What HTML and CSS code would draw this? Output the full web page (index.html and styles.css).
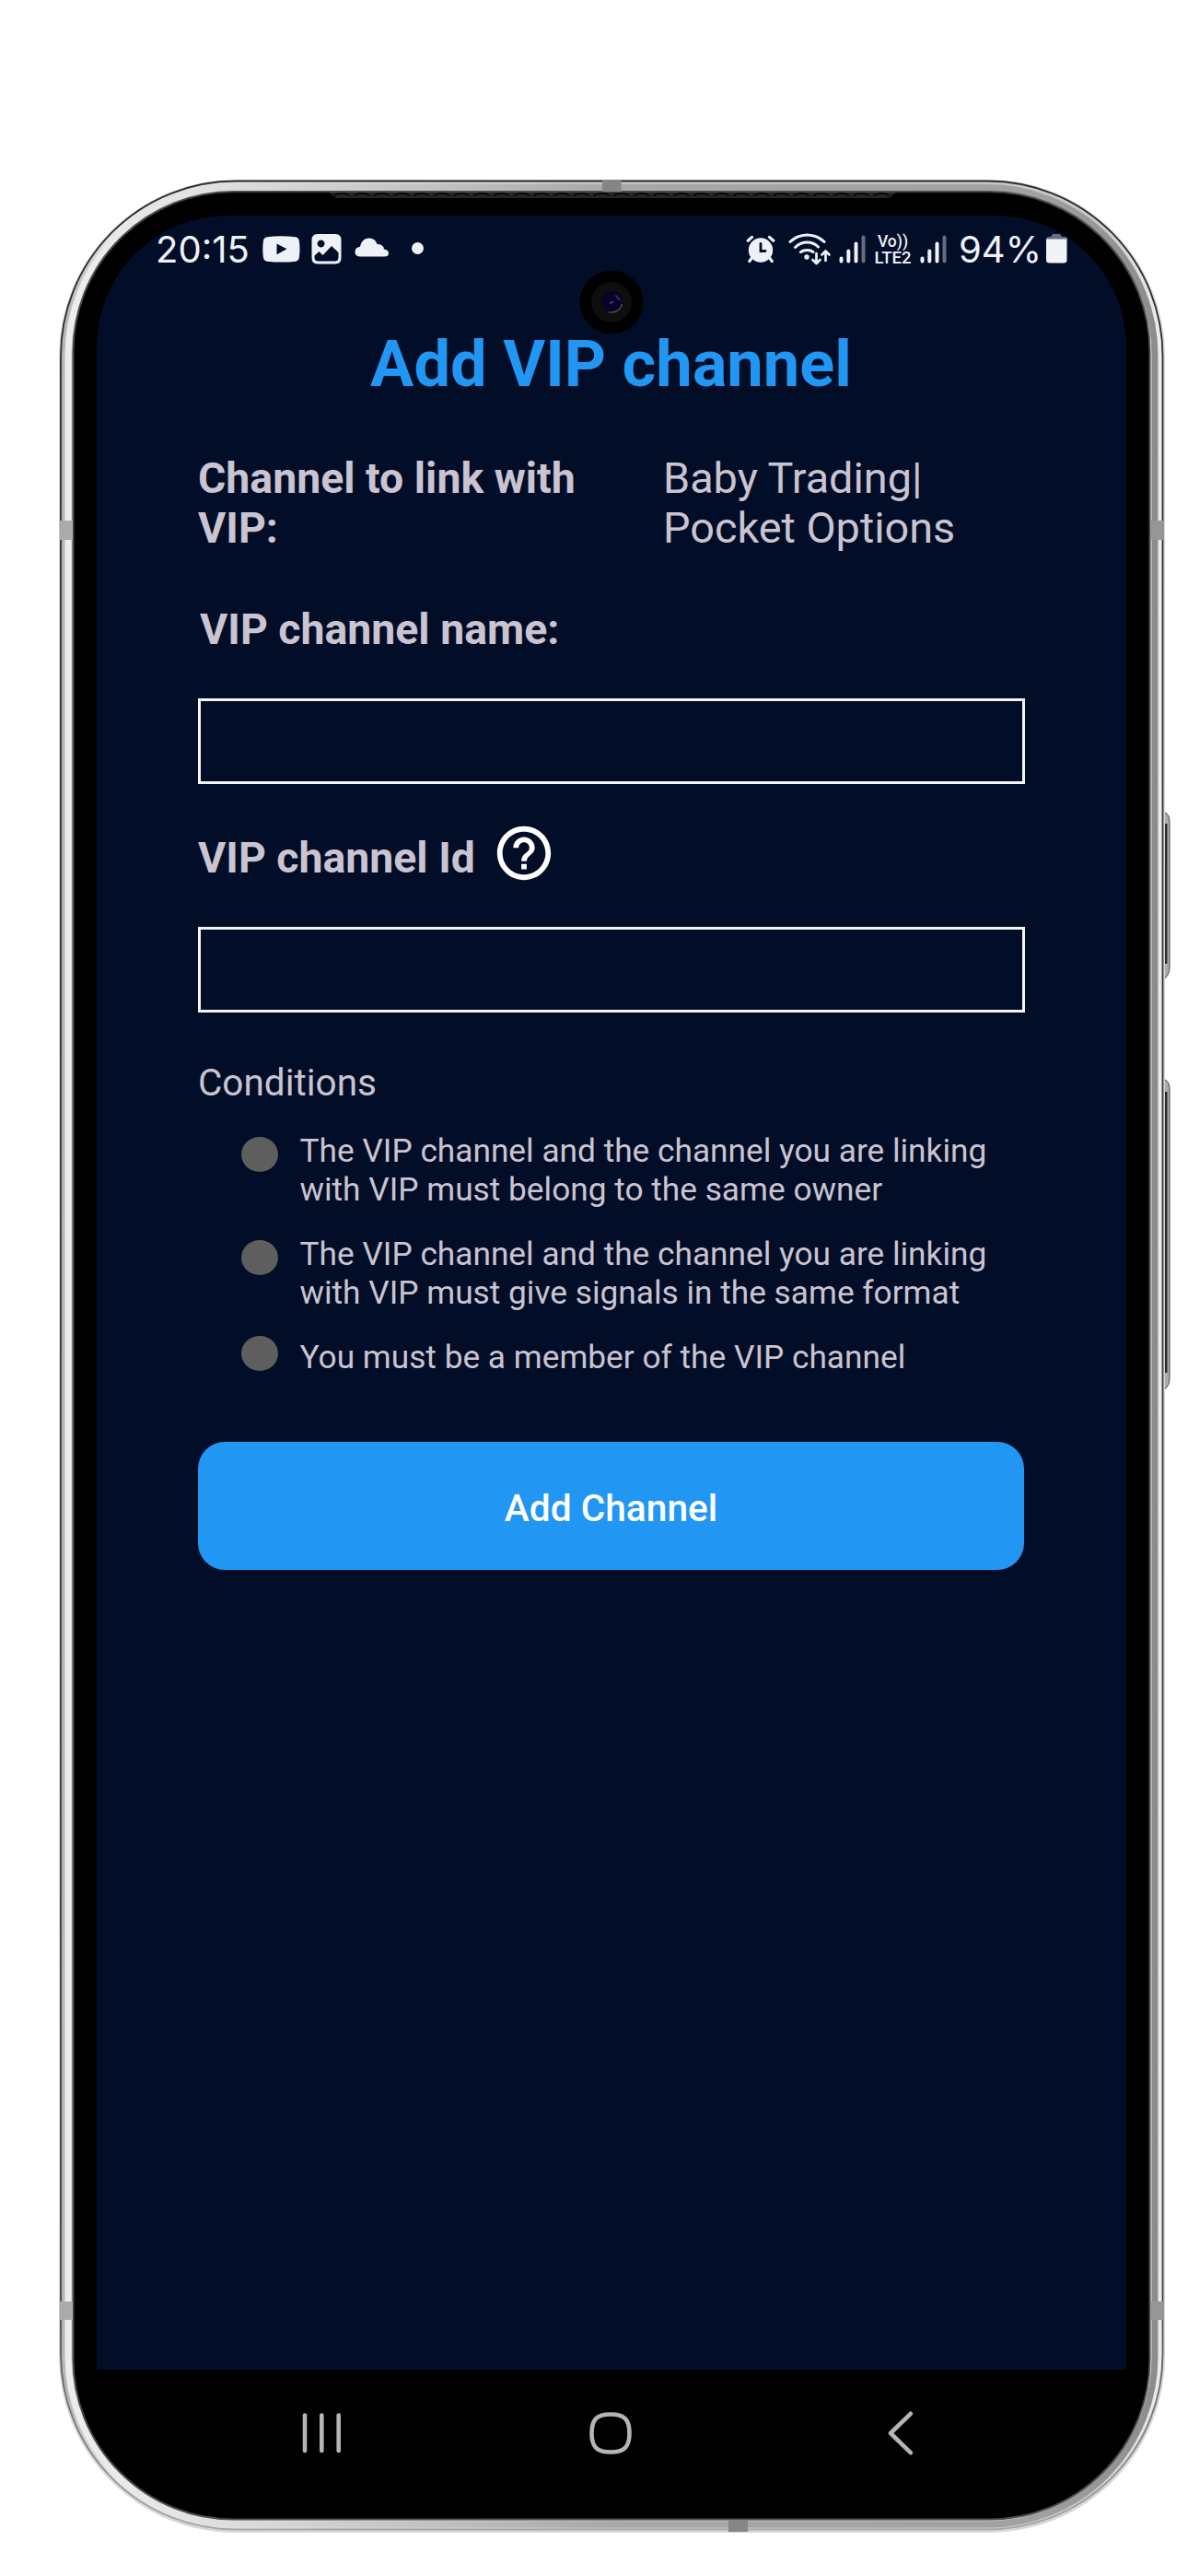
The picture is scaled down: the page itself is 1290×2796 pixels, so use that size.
FILE: index.html
```html
<!DOCTYPE html>
<html lang="en">
<head>
<meta charset="utf-8">
<title>Add VIP channel</title>
<link rel="stylesheet" href="styles.css">
</head>
<body>
<div class="phone">
  <svg class="frame" width="1220" height="2560" viewBox="60 192 1220 2560" fill="none" aria-hidden="true">
    <defs>
      <linearGradient id="metal" x1="0" y1="0" x2="1" y2="0">
        <stop offset="0" stop-color="#b4b4b4"/><stop offset=".05" stop-color="#e8e8e8"/><stop offset=".5" stop-color="#c4c4c4"/><stop offset=".94" stop-color="#c8c8c8"/><stop offset="1" stop-color="#eee"/>
      </linearGradient>
      <linearGradient id="inner" x1="0" y1="0" x2="1" y2="0">
        <stop offset="0" stop-color="#ededed"/><stop offset=".1" stop-color="#e4e4e4"/><stop offset=".5" stop-color="#a8a8a8"/><stop offset=".9" stop-color="#a0a0a0"/><stop offset="1" stop-color="#8c8c8c"/>
      </linearGradient>
      <linearGradient id="rim" x1="0" y1="0" x2="0" y2="1">
        <stop offset="0" stop-color="#2c2c2c"/><stop offset=".9" stop-color="#444"/><stop offset="1" stop-color="#a8a8a8"/>
      </linearGradient>
      <pattern id="mesh" width="21.7" height="7" patternUnits="userSpaceOnUse" x="361" y="208">
        <path d="M2 5q1-3 8-3t8 3" stroke="#080808" stroke-width="2"/>
      </pattern>
    </defs>
    <path d="M1263 882h2q5 2 5 10v158q0 9-7 13z" fill="#a9adab" stroke="#454848"/>
    <path d="M1266 894v152" stroke="#272d2d" stroke-width="3"/>
    <path d="M1263 1172h2q5 2 5 10v314q0 9-7 13z" fill="#a9adab" stroke="#454848"/>
    <path d="M1266 1185v305" stroke="#272d2d" stroke-width="3"/>
    <rect x="64" y="195" width="1201" height="2554" rx="192" fill="#d8d8d8"/>
    <rect x="66" y="196.500" width="1196.500" height="2549" rx="190" fill="url(#metal)" stroke="url(#rim)" stroke-width="1.800"/>
    <rect x="74" y="203.500" width="1180" height="2536.500" rx="182" stroke="url(#inner)" stroke-width="7"/>
    <rect x="79.500" y="208" width="1169" height="2526.500" rx="174" fill="#000" stroke="#4a4a4a" stroke-width="2"/>
    <path d="M357 209H973l-8 6H365z" fill="#252525"/>
    <path d="M361 209H970V215H361z" fill="url(#mesh)"/>
    <path d="M654 195.500h20.500v12.500H654z" fill="#858585"/>
    <path d="M791 2735h21v13h-21z" fill="#868686"/>
    <path d="M64.500 565H79v21H64.500zM64.500 2498H79v20H64.500z" fill="#ababab"/>
    <path d="M1250 565h14v21h-14zM1250 2498h14v20h-14z" fill="#969696"/>
  </svg>

  <main class="screen">
    <header class="status">
      <span class="clock">20:15</span>
      <svg class="ic-video" width="41" height="29" viewBox="0 0 41 29"><path fill="#eef2f8" fill-rule="evenodd" d="M5 1.200Q20 -.8 36 1.200 39 1.600 39.800 5q1.400 9.500 0 19-.8 3.300-3.800 3.700-15 1.800-31 0-3.200-.4-4-3.700-1.400-9.500 0-19 .8-3.400 4-3.800zM15.500 8.500v11.700l11-5.900z"/></svg>
      <svg class="ic-image" width="33" height="33" viewBox="0 0 33 33"><path fill="#eef2f8" fill-rule="evenodd" d="M7 0h19q6.500 0 6.500 6.500V26q0 6.500-6.500 6.500H7Q.5 32.500.5 26V6.500Q.5 0 7 0zM10.500 6.500a4 4 0 1 0 .1 0zM3.500 25.500q0 4 4 4h18q4 0 4-4v-5.500l-7.500-7-9.500 10-4-4-5 4.500z"/></svg>
      <svg class="ic-cloud" width="37" height="21" viewBox="0 0 37 21"><path fill="#eef2f8" d="M6.500 20.500Q.5 20.500.5 15.500T6 9.700Q8 .5 16 .5q6.500 0 8.500 6.500 7 0 7.500 5.500 5 .5 5 4.500 0 3.500-5 3.500z"/></svg>
      <i class="dot"></i>
      <span class="spacer"></span>
      <svg class="ic-alarm" width="32" height="31" viewBox="0 0 32 31" fill="none" stroke="#eef2f8" stroke-width="3.200" stroke-linecap="round"><circle cx="16" cy="16.500" r="13.200" fill="#eef2f8" stroke="none"/><path d="M2.200 6.200 6.500 2.400M29.800 6.200 25.500 2.400M6 25.500 3.800 28.500M26 25.500l2.200 3"/><path d="M16 9.500v8h5" stroke="#020d28" stroke-width="2.800"/></svg>
      <svg class="ic-wifi" width="47" height="35" viewBox="0 0 47 35" fill="none" stroke="#eef2f8" stroke-width="3" stroke-linecap="round" stroke-linejoin="round"><path d="M2 9.500Q10 2 20.500 2T39 9.500M7.500 15.500Q13 10 20.500 10q7 0 12 5M13.500 20.500Q16 18.500 20.500 18.500q4 0 6.500 2"/><circle cx="20" cy="26" r="1.200"/><path d="M30.500 22v11M26.500 29l4 4 4-4M40.500 30V20M36.500 23.500l4-4 4 4" stroke-width="2.700"/></svg>
      <svg class="ic-signal" width="29" height="31" viewBox="0 0 29 31" stroke="#eef2f8" stroke-width="4" stroke-linecap="round"><path d="M2.500 25.500v3M10.300 17.500v11M18.500 9.500v19"/><path d="M26.500 2.500v26" opacity=".42"/></svg>
      <span class="lte"><span class="vo">Vo))</span><span>LTE2</span></span>
      <svg class="ic-signal" width="29" height="31" viewBox="0 0 29 31" stroke="#eef2f8" stroke-width="4" stroke-linecap="round"><path d="M2.500 25.500v3M10.300 17.500v11M18.500 9.500v19"/><path d="M26.500 2.500v26" opacity=".42"/></svg>
      <span class="level">94%</span>
      <svg class="ic-battery" width="23" height="32" viewBox="0 0 23 32"><path d="M0 7V6q0-3 3-3h2l2-3h8l2 3h3q3 0 3 3v1z" fill="#656e80"/><path d="M0 5.500H22.500V28q0 3.500-3.500 3.500H3.500Q0 31.500 0 28z" fill="#f1f3f6"/></svg>
    </header>

    <section class="form">
      <h1 class="title">Add VIP channel</h1>
      <div class="link-row">
        <div class="label">Channel to link with VIP:</div>
        <div class="value">Baby Trading|<br>Pocket Options</div>
      </div>
      <label class="label name-label" for="name">VIP channel name:</label>
      <input class="field" id="name" type="text">
      <div class="id-row">
        <label class="label" for="cid">VIP channel Id</label>
        <svg class="help" width="70" height="70" viewBox="0 0 24 24" fill="#fff"><path d="M11 18h2v-2h-2v2zm1-16C6.480 2 2 6.480 2 12s4.480 10 10 10 10-4.480 10-10S17.520 2 12 2zm0 18c-4.410 0-8-3.590-8-8s3.590-8 8-8 8 3.590 8 8-3.590 8-8 8zm0-14c-2.210 0-4 1.790-4 4h2c0-1.100.9-2 2-2s2 .9 2 2c0 2-3 1.750-3 5h2c0-2.250 3-2.500 3-5 0-2.210-1.790-4-4-4z"/></svg>
      </div>
      <input class="field" id="cid" type="text">
      <h2 class="subtitle">Conditions</h2>
      <ul class="conditions">
        <li><i class="bullet"></i><span>The VIP channel and the channel you are linking<br>with VIP must belong to the same owner</span></li>
        <li><i class="bullet"></i><span>The VIP channel and the channel you are linking<br>with VIP must give signals in the same format</span></li>
        <li class="short"><i class="bullet"></i><span>You must be a member of the VIP channel</span></li>
      </ul>
      <button class="submit" type="button">Add Channel</button>
    </section>
  </main>

  <nav class="navbar">
    <svg width="43" height="46" viewBox="0 0 43 46" stroke="#b5b5b5" stroke-width="4.600" stroke-linecap="round"><path d="M3 3.500v38.500M21.300 3.500v38.500M39.700 3.500v38.500"/></svg>
    <svg class="home" width="46" height="46" viewBox="0 0 46 46" fill="none" stroke="#b5b5b5" stroke-width="4.600"><path d="M23 2.500C38 2.500 43.500 8 43.500 23S38 43.500 23 43.500 2.500 38 2.500 23 8 2.500 23 2.500z"/></svg>
    <svg class="back" width="28" height="48" viewBox="0 0 28 48" fill="none" stroke="#b5b5b5" stroke-width="4.600" stroke-linecap="round" stroke-linejoin="round"><path d="M24.800 2.800 3 24l21.800 21.200"/></svg>
  </nav>

  <svg class="camera" width="70" height="70" viewBox="-35 -35 70 70" aria-hidden="true">
    <circle r="34.500" fill="#000"/><circle r="22" fill="#0e0e0e"/><circle cx=".3" cy="-.5" r="11" fill="#06032a"/>
    <path d="M3-9Q9-7 10.500-1L6-3z" fill="#3f195e"/><path d="M-3 11Q9 12 11.500 2" fill="none" stroke="#505055" stroke-width="1.300"/><path d="M-2 1.500 2-1" stroke="#7a4ca0" stroke-width="1.300"/>
  </svg>
</div>
</body>
</html>
```
FILE: styles.css
```css
* { box-sizing: border-box; }

body {
  margin: 0;
  background: #fff;
  font-family: Roboto, "Liberation Sans", sans-serif;
}

.phone {
  position: relative;
  display: flex;
  flex-direction: column;
  width: 1290px;
  height: 2796px;
  padding: 234px 67px 64px 105px;
}

.frame {
  position: absolute;
  left: 60px;
  top: 192px;
}

.camera {
  position: absolute;
  left: 629px;
  top: 293px;
}

.screen {
  position: relative;
  width: 1118px;
  height: 2338px;
  background: #020d28;
  border-radius: 142px 142px 0 0;
}

/* Status bar */
.status {
  display: flex;
  align-items: center;
  height: 68px;
  padding: 4px 64px 0 64px;
  color: #eef2f8;
  font-family: Inter, Roboto, sans-serif;
  font-size: 40px;
}

.status svg { flex: none; }
.clock { width: 105px; }
.ic-video { margin-left: 11px; }
.ic-image { margin-left: 12px; }
.ic-cloud { margin-left: 14px; margin-top: -3px; }

.dot {
  width: 13px;
  height: 13px;
  margin-left: 25px;
  margin-top: -2px;
  border-radius: 50%;
  background: #eef2f8;
}

.spacer { flex: 1; }
.ic-wifi { margin-left: 14px; }
.ic-signal { margin-left: 8px; }

.lte {
  display: flex;
  flex-direction: column;
  align-items: center;
  width: 43px;
  margin: 2px 0 0 8px;
  font: 500 18.500px/18px Roboto, sans-serif;
}

.vo { font-size: 17.500px; }
.level { width: 91px; margin-left: 13px; }
.ic-battery { margin-left: 4px; }

/* Form */
.form {
  display: flex;
  flex-direction: column;
  padding: 52px 111px 0 110px;
  color: #cac4d0;
}

.title {
  margin: 0;
  color: #2196f3;
  font-size: 70.400px;
  font-weight: 700;
  line-height: 82px;
  text-align: center;
}

.link-row {
  display: grid;
  grid-template-columns: 505px 1fr;
  margin-top: 55.500px;
  font-size: 46.800px;
  line-height: 54.500px;
}

.link-row .label { padding-right: 70px; }

.label {
  font-size: 46.400px;
  font-weight: 700;
  line-height: 54.500px;
}

.name-label { margin: 55px 0 0 2px; }

.field {
  width: 898px;
  height: 93px;
  padding: 0 20px;
  border: 3px solid #f5f6f8;
  border-radius: 0;
  background: transparent;
  color: #cac4d0;
  font: 46px Roboto, sans-serif;
}

.name-label + .field { margin-top: 48px; }

.id-row {
  display: flex;
  align-items: center;
  height: 155px;
}

.id-row .label { padding-top: 5px; }
.help { margin: -5px 0 0 18px; }

.subtitle {
  margin: 51px 0 0;
  font-size: 40.500px;
  font-weight: 400;
  line-height: 50px;
}

.conditions {
  margin: 28px 0 0;
  padding: 0 0 0 47px;
  list-style: none;
  font-size: 35.250px;
  line-height: 41.500px;
}

.conditions li {
  display: flex;
  gap: 23.500px;
  height: 112px;
}

.conditions span { padding-top: 1px; }
.conditions .short { height: 113px; }

.bullet {
  width: 40px;
  height: 38px;
  margin-top: 6px;
  border-radius: 50%;
  background: #5e5e5e;
}

.short .bullet { margin-top: -2px; }

.submit {
  height: 139px;
  padding: 4px 0 0;
  border: 0;
  border-radius: 29px;
  background: #2196f3;
  color: #fff;
  font: 500 40.700px Roboto, sans-serif;
}

/* System navigation */
.navbar {
  position: relative;
  display: flex;
  align-items: center;
  height: 138px;
  padding-left: 223px;
}

.home { margin-left: 269px; }
.back { margin-left: 278px; }
```
